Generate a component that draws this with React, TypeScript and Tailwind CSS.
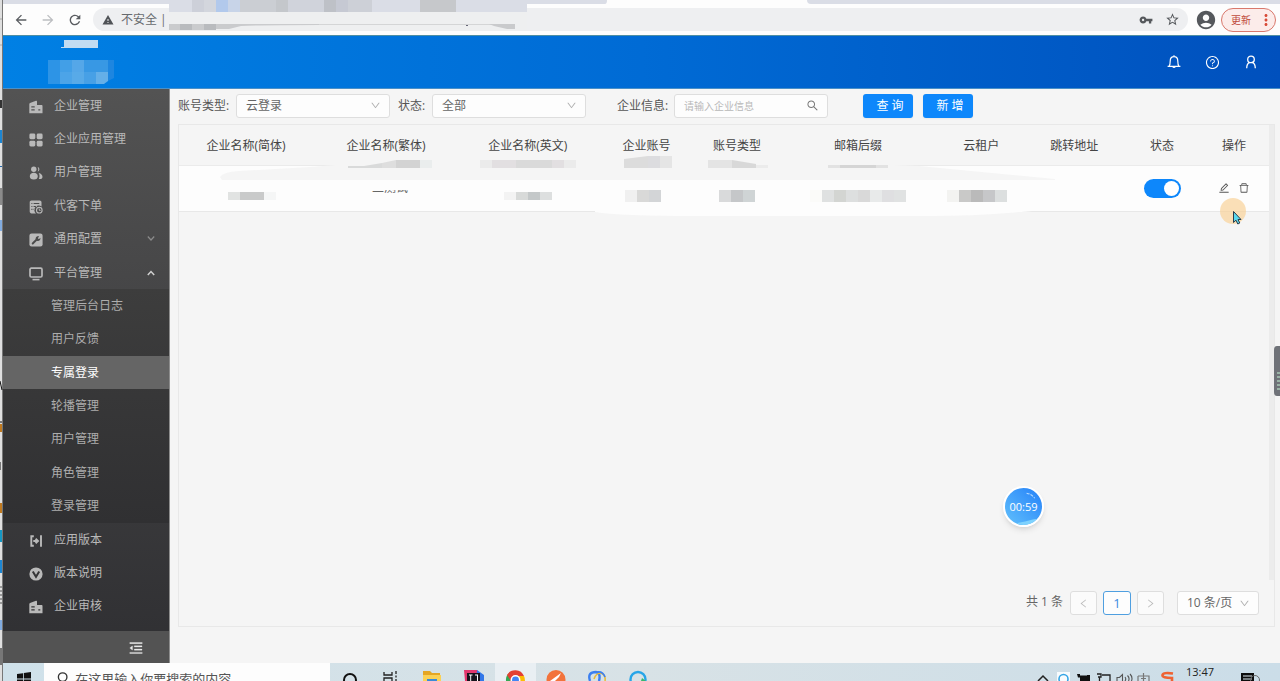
import React from "react";
import {
  AiOutlineQuestionCircle,
  AiOutlineMenuFold,
  AiOutlineEdit,
  AiOutlineDelete,
  AiOutlineSearch,
  AiOutlineDown,
  AiOutlineLeft,
  AiOutlineRight,
} from "react-icons/ai";
import {
  MdArrowBack,
  MdArrowForward,
  MdRefresh,
  MdWarning,
  MdVpnKey,
  MdStarBorder,
  MdAccountCircle,
  MdMoreVert,
} from "react-icons/md";

type IconName = "building" | "grid" | "users" | "order" | "wrench" | "monitor" | "version" | "note";

function MenuIcon({ name }: { name: IconName }) {
  return (
    <svg viewBox="0 0 14 14" className="h-[14px] w-[14px] shrink-0" fill="currentColor" aria-hidden="true">
      {name === "building" && (
        <path
          fillRule="evenodd"
          d="M1 3 7 .8a.7.7 0 0 1 1 .6V5h4.5c.6 0 1 .4 1 1v7.2H.3V4c0-.5.3-.8.7-1ZM2.3 6.2v1.3h3.4V6.2H2.3Zm0 3.1v1.3h3.4V9.3H2.3Zm7 0v1.3h2V9.3h-2Z"
        />
      )}
      {name === "grid" && (
        <>
          <rect x="0.4" y="0.6" width="5.9" height="5.6" rx="1.4" />
          <rect x="7.7" y="0.6" width="5.9" height="5.6" rx="1.4" />
          <rect x="0.4" y="7.8" width="5.9" height="5.6" rx="1.4" />
          <rect x="7.7" y="7.8" width="5.9" height="5.6" rx="1.4" />
        </>
      )}
      {name === "users" && (
        <>
          <circle cx="4.8" cy="3.3" r="2.7" />
          <path d="M.8 10.2c0-2.2 1.7-3.4 4-3.4s4 1.2 4 3.4c0 2-1.3 3.3-4 3.3s-4-1.3-4-3.3Z" />
          <path d="M8.6.9a2.5 2.5 0 0 1 0 4.8c.9-1.4.9-3.4 0-4.8ZM9.7 6.9c2.4.5 3.8 2 3.8 4 0 1.2-.9 2-2.5 2.1-.5 0-.9-.1-1.2-.3 1-1.6 1-4-.1-5.8Z" />
        </>
      )}
      {name === "order" && (
        <>
          <path
            fillRule="evenodd"
            d="M2.5.5h8.2c1 0 1.8.8 1.8 1.8V6.5a4.1 4.1 0 0 0-5.5 6.9H2.5C1.400 13.400.7 12.600.7 11.600V2.300C.7 1.300 1.500.5 2.500.5ZM4.600 3v1.100h5.700V3H4.600Zm0 2.900v1.100h3.300V5.900H4.600Zm0 2.900v1.100h1.400V8.800H4.600ZM2.400 3v1.100h1V3h-1Zm0 2.900v1.100h1V5.900h-1Zm0 2.900v1.100h1V8.800h-1Z"
          />
          <circle cx="10.300" cy="10.200" r="2.800" fill="none" stroke="currentColor" strokeWidth="1.100" />
          <path d="M10.300 8.600v1.800h1.400" fill="none" stroke="currentColor" strokeWidth="0.900" />
        </>
      )}
      {name === "wrench" && (
        <>
          <rect x="0.400" y="0.500" width="13.200" height="13" rx="2.200" />
          <path d="M3.700 10.500 7.200 7" stroke="#4b4b4b" strokeWidth="1.900" strokeLinecap="round" />
          <path d="M10.200 3.500 8.900 4.900l.3.900.9.300 1.300-1.300c.4 2-1.100 3.500-2.900 3.200C6.600 7.600 6.200 5.900 6.900 4.600c.7-1.200 2-1.700 3.300-1.100Z" fill="#4b4b4b" />
        </>
      )}
      {name === "monitor" && (
        <>
          <rect x="1" y="1.200" width="12" height="8.800" rx="1.300" fill="none" stroke="currentColor" strokeWidth="1.700" />
          <path d="M3.500 11.800h7v1.600h-7z" />
        </>
      )}
      {name === "version" && (
        <path
          d="M4.800 2.200H2.300v9.600H4.800M12 1.300v11.400M4.300 7h4M6.600 4.700 9 7 6.600 9.300"
          fill="none"
          stroke="currentColor"
          strokeWidth="1.900"
        />
      )}
      {name === "note" && (
        <>
          <circle cx="7" cy="7" r="6.600" />
          <path d="M3.800 4.500 7 9.800l3.200-5.300" fill="none" stroke="#353537" strokeWidth="2" />
        </>
      )}
    </svg>
  );
}

interface MenuEntry {
  label: string;
  icon: IconName;
  arrow?: "down" | "up";
}

const topMenu: MenuEntry[] = [
  { label: "企业管理", icon: "building" },
  { label: "企业应用管理", icon: "grid" },
  { label: "用户管理", icon: "users" },
  { label: "代客下单", icon: "order" },
  { label: "通用配置", icon: "wrench", arrow: "down" },
  { label: "平台管理", icon: "monitor", arrow: "up" },
];
const subMenu = ["管理后台日志", "用户反馈", "专属登录", "轮播管理", "用户管理", "角色管理", "登录管理"];
const bottomMenu: MenuEntry[] = [
  { label: "应用版本", icon: "version" },
  { label: "版本说明", icon: "note" },
  { label: "企业审核", icon: "building" },
];

function MenuItem({ item }: { item: MenuEntry }) {
  return (
    <li className="flex flex-1">
      <a href="#" className="flex flex-1 items-center pr-[14px] pl-[26px] text-[#b9b9b9]">
        <span className="pt-[2px]">
          <MenuIcon name={item.icon} />
        </span>
        <span className="flex-1 pl-[11px]">{item.label}</span>
        {item.arrow === "down" && (
          <svg viewBox="0 0 8 8" className="h-2 w-2 text-[#8b8b8b]" fill="none" stroke="currentColor" strokeWidth="1.200">
            <path d="M.8 1.500 4 5l3.200-3.500" />
          </svg>
        )}
        {item.arrow === "up" && (
          <svg viewBox="0 0 8 8" className="h-2 w-2 text-[#d0d0d0]" fill="none" stroke="currentColor" strokeWidth="1.500">
            <path d="M.8 6 4 2.500 7.200 6" />
          </svg>
        )}
      </a>
    </li>
  );
}

function Sidebar() {
  return (
    <aside className="flex w-[167px] shrink-0 flex-col border-r border-[#8d8d8d] bg-linear-to-b from-[#535353] to-[#2f2f32]">
      <nav className="flex flex-1 flex-col pb-2">
        <ul className="flex flex-1 flex-col">
          {topMenu.map((m) => (
            <MenuItem key={m.label} item={m} />
          ))}
          <li className="flex flex-[7]">
            <ul className="flex flex-1 flex-col bg-linear-to-b from-[#3d3d3d] to-[#303032]">
              {subMenu.map((label) => (
                <li key={label} className="flex flex-1">
                  <a
                    href="#"
                    className={
                      label === "专属登录"
                        ? "flex flex-1 items-center bg-[#656565] pl-12 text-white"
                        : "flex flex-1 items-center pl-12 text-[#adadad]"
                    }
                  >
                    {label}
                  </a>
                </li>
              ))}
            </ul>
          </li>
          {bottomMenu.map((m) => (
            <MenuItem key={m.label} item={m} />
          ))}
        </ul>
      </nav>
      <div className="flex h-8 items-center justify-end bg-[#535353] pt-[2px] pr-[25px]">
        <button aria-label="收起菜单" className="text-[#e8e8e8]">
          <AiOutlineMenuFold className="h-4 w-4" stroke="currentColor" strokeWidth="20" />
        </button>
      </div>
    </aside>
  );
}

function BrowserBar() {
  return (
    <div className="relative h-9 shrink-0 border-b border-[#4f8fa3] bg-[#fdfdfd] pt-1">
      <svg className="absolute top-0 left-0 h-1 w-full" aria-hidden="true">
        <rect width="100%" height="4" fill="#dadde6" />
        <path d="M602 4Q604 4 604 0H804Q804 4 808 4Z" fill="#fdfdfd" />
      </svg>
      <div className="flex h-[31px] items-center pr-1">
        <div className="flex items-center gap-[11px] pl-[10px] text-[#5a5d61]">
          <button aria-label="后退">
            <MdArrowBack className="h-4 w-4" />
          </button>
          <button aria-label="前进" className="text-[#bcbec1]">
            <MdArrowForward className="h-4 w-4" />
          </button>
          <button aria-label="刷新">
            <MdRefresh className="h-4 w-4" />
          </button>
        </div>
        <div className="ml-[10px] flex h-[23px] flex-1 items-center rounded-full bg-[#eeeff1] pr-2 pl-[9px] text-[#66696d]">
          <MdWarning className="h-3 w-3 text-[#505357]" />
          <span className="flex-1 pl-[7px]">不安全 |</span>
          <MdVpnKey className="h-[14px] w-[14px] text-[#55585c]" />
          <MdStarBorder className="ml-3 h-[15px] w-[15px] text-[#55585c]" />
        </div>
        <MdAccountCircle className="ml-[7px] h-[22px] w-[22px] text-[#55585c]" />
        <button className="ml-1 flex h-6 w-[55px] items-center justify-between rounded-full border border-[#d9786c] bg-[#fcecea] pl-[9px] text-[10px] text-[#bf4a3c]">
          更新
          <MdMoreVert className="h-[18px] w-[18px] text-[#d84a38]" />
        </button>
      </div>
      <svg className="absolute top-0 left-[166px] h-[31px] w-[358px]" viewBox="0 0 358 31" aria-hidden="true">
        <rect width="358" height="12" fill="#dadde6" />
        <g>
          <rect x="23" width="12" height="12" fill="#cdd0d9" />
          <rect x="35" width="12" height="12" fill="#d3d6dd" />
          <rect x="47" width="12" height="12" fill="#b2c9ec" />
          <rect x="59" width="12" height="12" fill="#c8d4e8" />
          <rect x="71" width="36" height="12" fill="#cbced3" />
          <rect x="107" width="12" height="12" fill="#c4c7cb" />
          <rect x="119" width="36" height="12" fill="#d0d3db" />
          <rect x="155" width="12" height="12" fill="#bec1c7" />
          <rect x="167" width="12" height="12" fill="#c6c9d3" />
          <rect x="179" width="24" height="12" fill="#cdd0d7" />
          <rect x="251" width="36" height="12" fill="#c6c8cb" />
        </g>
        <rect y="12" width="358" height="19" fill="#eeeff0" />
        <path d="M0 24H150V25Q90 25 72 26L60 29H46V30H0Z" fill="#cacbcd" />
        <path d="M11 24h12v6H11zM35 24h12v6H35z" fill="#b9bbbe" />
        <path d="M150 24H338V25H150Z" fill="#d4d5d6" />
        <path d="M320 24H346V29H338L325 26Z" fill="#c9cacc" />
        <path d="M297 25h2v1h-2z" fill="#667" />
      </svg>
    </div>
  );
}

function AppHeader() {
  return (
    <header className="flex h-[53px] shrink-0 items-center border-b border-[#4a90c8] bg-linear-to-r from-[#0080e4] via-[#006bd5] to-[#0050bd]">
      <svg viewBox="0 0 70 48" className="ml-[45px] h-12 w-[70px]" aria-hidden="true">
        <path d="M16 2H50V10H13V9H16Z" fill="#c1dcf2" />
        <g>
          <path d="M0 22h12v24H0z" fill="#2d94e6" />
          <path d="M12 22h12v12H12z" fill="#429fe7" />
          <path d="M24 22h12v12H24z" fill="#55a7e8" />
          <path d="M36 22h24v12H36z" fill="#3898e4" />
          <path d="M12 34h12v12H12z" fill="#4ca4e8" />
          <path d="M24 34h12v12H24z" fill="#58aae8" />
          <path d="M36 34h12v12H36z" fill="#47a0e6" />
          <path d="M48 34h12v9l-4 3h-8z" fill="#65afe8" />
          <path d="M60 22h6v18l-6 3z" fill="#1e86e0" />
        </g>
      </svg>
      <div className="ml-auto flex items-center gap-6 pr-[22px] text-white">
        <button aria-label="通知">
          <svg viewBox="0 0 14 14" className="h-[14px] w-[14px]" fill="none" stroke="currentColor" strokeWidth="1.200">
            <path d="M.6 11.300H13.400M2 11.300C3 10.300 3.200 9.300 3.200 6.200 3.200 3.500 4.800 1.700 7 1.700s3.800 1.800 3.800 4.500c0 3.100.2 4.100 1.200 5.100M7 .2v1.500" />
            <path d="M5.300 12.100a1.800 1.500 0 0 0 3.400 0Z" fill="currentColor" stroke="none" />
          </svg>
        </button>
        <button aria-label="帮助">
          <AiOutlineQuestionCircle className="h-[15px] w-[15px]" />
        </button>
        <button aria-label="账户">
          <svg viewBox="0 0 14 14" className="h-[14px] w-[14px]" fill="none" stroke="currentColor" strokeWidth="1.300">
            <circle cx="7" cy="4.400" r="3.300" />
            <path d="M5.500 7.400C3.700 8.200 2.800 10.400 2.700 13.200M8.500 7.400c1.800.8 2.700 3 2.800 5.800" />
          </svg>
        </button>
      </div>
    </header>
  );
}

function PickList({ id, value, width, label }: { id: string; value: string; width: string; label?: string }) {
  return (
    <div className={"relative flex h-6 items-center " + width}>
      <select
        id={id}
        aria-label={label}
        className="h-full w-full appearance-none rounded-[3px] border border-[#dedede] bg-[#fdfdfd] pl-[9px] text-[#666]"
        defaultValue={value}
      >
        <option>{value}</option>
      </select>
      <AiOutlineDown className="pointer-events-none absolute right-[9px] h-[11px] w-[11px] text-[#b0b0b0]" />
    </div>
  );
}

function Filters() {
  return (
    <form className="flex h-[35px] items-center pb-[2px] text-[#555]" onSubmit={(e) => e.preventDefault()}>
      <label htmlFor="account-type" className="w-[58px] whitespace-nowrap">
        账号类型:
      </label>
      <PickList id="account-type" value="云登录" width="w-[154px]" />
      <label htmlFor="state" className="ml-2 w-[34px] whitespace-nowrap">
        状态:
      </label>
      <PickList id="state" value="全部" width="w-[154px]" />
      <label htmlFor="company" className="ml-[31px] w-[57px] whitespace-nowrap">
        企业信息:
      </label>
      <div className="relative flex h-6 w-[154px] items-center">
        <input
          id="company"
          placeholder="请输入企业信息"
          className="h-full w-full rounded-[3px] border border-[#dedede] bg-[#fdfdfd] pl-[9px] text-[10px] placeholder:text-[#b8b8b8]"
        />
        <AiOutlineSearch className="absolute right-[9px] h-[13px] w-[13px] text-[#777]" />
      </div>
      <button className="ml-[35px] h-6 w-[50px] rounded-[3px] bg-[#0d87fb] pl-1 text-white shadow-xs">查 询</button>
      <button className="ml-[10px] h-6 w-[50px] rounded-[3px] bg-[#0d87fb] pl-1 text-white shadow-xs">新 增</button>
    </form>
  );
}

function Mosaic({ colors, short }: { colors: string[]; short?: boolean }) {
  return (
    <div className={short ? "flex h-2 justify-center" : "flex h-3 justify-center"}>
      {colors.map((c, i) => (
        <span key={i} className="w-3 shrink-0" style={{ backgroundColor: c }} />
      ))}
    </div>
  );
}

const columns: { title: string; width: string }[] = [
  { title: "企业名称(简体)", width: "w-[12.3%]" },
  { title: "企业名称(繁体)", width: "w-[13.4%]" },
  { title: "企业名称(英文)", width: "w-[12.6%]" },
  { title: "企业账号", width: "w-[9.2%]" },
  { title: "账号类型", width: "w-[7.4%]" },
  { title: "邮箱后缀", width: "w-[14.8%]" },
  { title: "云租户", width: "w-[7.8%]" },
  { title: "跳转地址", width: "w-[9.3%]" },
  { title: "状态", width: "w-[6.8%]" },
  { title: "操作", width: "w-[6.4%]" },
];

function Smudges() {
  return (
    <svg
      className="pointer-events-none absolute top-0 left-0 h-24 w-full"
      viewBox="0 0 1090 96"
      preserveAspectRatio="none"
      aria-hidden="true"
    >
      <path d="M41 52Q44 47 60 46L131 42L170 39H690L740 41L876 54V55H43Z" fill="#f5f5f5" />
      <path d="M180 55H240V65H180Z" fill="#fdfdfd" />
      <path d="M416 85H864Q800 91 750 91H520Q440 91 416 87Z" fill="#fdfdfd" />
      <g fill="#dcdcdc">
        <path d="M169 43V41H185L203 38V43H169Z" fill="#d9dada" />
        <path d="M203 38L217 35V43H203Z" fill="#dedede" />
        <path d="M217 35h24v8h-24z" fill="#d3d3d3" />
        <path d="M241 35h12v8h-12z" fill="#eaeded" />
        <path d="M301 35h12v8h-12zM385 35h12v8h-12z" fill="#ebebeb" />
        <path d="M313 35h24v8h-24zM373 35h12v8h-12z" fill="#e2dfe1" />
        <path d="M337 35h36v8h-36z" fill="#dadada" />
        <path d="M445 34L469 31V43H445Z" />
        <path d="M469 31h12v12h-12z" fill="#dcdcdf" />
        <path d="M481 31h12v12h-12z" fill="#e5e5e5" />
        <path d="M529 35h24v8h-24z" fill="#e4e4e4" />
        <path d="M553 35L577 39V43H553Z" fill="#d8d8d8" />
        <path d="M577 40h12v3h-12z" fill="#ebebeb" />
        <path d="M649 40h60v3h-60z" fill="#e2e2e2" />
        <path d="M661 40h36v3h-36z" fill="#d5d5d5" />
      </g>
    </svg>
  );
}

function CompanyTable() {
  return (
    <div className="relative flex-1">
      <table className="w-full table-fixed border-collapse text-center">
        <thead>
          <tr className="h-10 text-[#444]">
            {columns.map((c) => (
              <th key={c.title} className={"border-b border-[#ebebeb] pt-[2px] font-normal whitespace-nowrap " + c.width}>
                {c.title}
              </th>
            ))}
          </tr>
        </thead>
        <tbody>
          <tr className="h-[46px] border-b border-[#e8e8e8] bg-[#fdfdfd]">
            <td className="pt-4">
              <div className="pl-3">
                <Mosaic colors={["#e1e3e2", "#c9caca", "#c9caca", "#f5f6f6"]} short />
              </div>
            </td>
            <td className="pl-2 text-[#666]">二测试</td>
            <td className="pt-4">
              <Mosaic colors={["#f3f3f3", "#d8dad9", "#c4c8c9", "#dddfdf"]} short />
            </td>
            <td className="pt-4 pr-2">
              <Mosaic colors={["#f0f0f0", "#d9d9d8", "#d3d5d7"]} />
            </td>
            <td className="pt-4">
              <Mosaic colors={["#d9dadb", "#c5c7c9", "#cfd4d5"]} />
            </td>
            <td className="pt-4">
              <Mosaic
                colors={["#fbfbf9", "#dfe1e1", "#d3d5d2", "#dddfdf", "#d9d9d9", "#e8eaea", "#dfdfe1", "#e0e2e2"]}
              />
            </td>
            <td className="pt-4 pr-2">
              <Mosaic colors={["#f3f3f1", "#c9c9c8", "#bababa", "#c6c7c9", "#dcdfdf"]} />
            </td>
            <td />
            <td>
              <button
                role="switch"
                aria-checked="true"
                aria-label="状态"
                className="mx-auto flex h-[19px] w-[37px] items-center justify-end rounded-full bg-[#0d87fb] pr-[2px]"
              >
                <span className="h-[15px] w-[15px] rounded-full bg-white" />
              </button>
            </td>
            <td>
              <div className="flex items-center justify-center gap-2 text-[#555]">
                <button aria-label="编辑">
                  <AiOutlineEdit className="h-3 w-3" />
                </button>
                <button aria-label="删除">
                  <AiOutlineDelete className="h-3 w-3" />
                </button>
              </div>
            </td>
          </tr>
        </tbody>
      </table>
      <Smudges />
    </div>
  );
}

function Pagination() {
  return (
    <div className="flex h-[46px] items-center justify-end pr-[15px] text-[#666]">
      <span className="pr-[7px] pb-[2px]">共 1 条</span>
      <button
        aria-label="上一页"
        className="flex h-6 w-[27px] items-center justify-center rounded-[3px] border border-[#dedede] bg-[#fbfbfb] text-[#bbb]"
      >
        <AiOutlineLeft className="h-[11px] w-[11px]" />
      </button>
      <button className="ml-[6px] h-6 w-7 rounded-[3px] border border-[#4f9fe0] bg-[#fdfdfd] text-[13px] text-[#3a8be0]">
        1
      </button>
      <button
        aria-label="下一页"
        className="ml-[6px] flex h-6 w-[27px] items-center justify-center rounded-[3px] border border-[#dedede] bg-[#fbfbfb] text-[#bbb]"
      >
        <AiOutlineRight className="h-[11px] w-[11px]" />
      </button>
      <div className="ml-[13px]">
        <PickList id="page-size" value="10 条/页" width="w-[82px]" label="每页条数" />
      </div>
    </div>
  );
}

function Taskbar() {
  return (
    <footer className="flex h-[18px] shrink-0 overflow-hidden bg-linear-to-r from-[#cfe1ea] via-[#d8e2e6] to-[#cbdde8]">
      <button aria-label="开始" className="flex h-8 w-[41px] items-center justify-center">
        <svg viewBox="0 0 14 14" className="h-[14px] w-[14px]" fill="#111">
          <path d="M0 2 6 1.200V6.600H0ZM6.800 1.100 14 0V6.600H6.800ZM0 7.400H6V12.800L0 12ZM6.800 7.400H14V14L6.800 12.900Z" />
        </svg>
      </button>
      <label className="flex h-8 w-[286px] items-center bg-[#fdfdfd] pl-3">
        <svg viewBox="0 0 14 18" className="h-[18px] w-[14px]" fill="none" stroke="#333" strokeWidth="1.400">
          <circle cx="7" cy="7" r="4.500" />
          <path d="M5 11 1 17" />
        </svg>
        <input
          aria-label="搜索"
          placeholder="在这里输入你要搜索的内容"
          className="w-full pl-[6px] text-[13px] placeholder:text-[#555]"
        />
      </label>
      <svg viewBox="0 0 340 18" className="h-[18px] w-[340px]" aria-hidden="true">
        <rect x="165" width="41" height="18" fill="#e9eff3" />
        <circle cx="20" cy="17" r="6" fill="none" stroke="#111" strokeWidth="2" />
        <path d="M54 9V12H62V9M54 18V15H62V18M66 8v3M66 12.500v2M66 16v2" stroke="#222" strokeWidth="1.300" fill="none" />
        <path d="M93 8H100L102 10H110V18H93Z" fill="#e5a623" />
        <path d="M93 12H111V18H93Z" fill="#fbd156" />
        <path d="M97 16H107V18H97Z" fill="#3a8bd8" />
        <path d="M134 7H147L151 12V18H135Z" fill="#e2386e" />
        <path d="M147 7L154 12V18H146Z" fill="#3277e8" />
        <path d="M137 10H150V18H137Z" fill="#16131c" />
        <path d="M139 12h3.500M140.700 12v6M147.500 12v6M145 12h3" stroke="#fff" strokeWidth="1" />
        <path d="M176 18A9 9 0 0 1 192 11.500L186 18Z" fill="#35a853" />
        <path d="M177 12A9.500 9.500 0 0 1 194 13H185L181 18Z" fill="#e34133" />
        <path d="M186 13H194Q195 15 195 18H187Z" fill="#fbbc05" />
        <circle cx="185.500" cy="17" r="4.200" fill="#4285f4" stroke="#fff" strokeWidth="1.500" />
        <circle cx="226" cy="16.500" r="9.500" fill="#f2733b" />
        <path d="M220 18L231 10L229 14L225 18Z" fill="#fff" />
        <path d="M260 18Q257 9 266 9Q271 10 269 18" fill="none" stroke="#3b7ff0" strokeWidth="2.400" />
        <path d="M264 16Q266 10 271 10Q276 12 275 18" fill="none" stroke="#e9bb3b" strokeWidth="1.600" />
        <path d="M267 9Q273 8 275 14" fill="none" stroke="#3b7ff0" strokeWidth="1.600" />
        <circle cx="308" cy="16.500" r="7.500" fill="none" stroke="#27a5e8" strokeWidth="2.400" />
        <path d="M312 15l4 3h-5z" fill="#39b86b" />
      </svg>
      <div className="ml-auto flex h-[18px]">
        <svg viewBox="0 0 150 18" className="h-[18px] w-[150px]" aria-hidden="true">
          <path d="M12 18L17 13L22 18" stroke="#222" strokeWidth="1.500" fill="none" />
          <rect x="31" y="9" width="13" height="9" fill="#f7fbfd" />
          <circle cx="37.500" cy="16" r="4.500" fill="none" stroke="#35a5e5" strokeWidth="1.600" />
          <path d="M51 11h3v1.500h8V18H54v-3.500h-2z" fill="#111" />
          <path d="M61 12h3v6h-3z" fill="#111" />
          <path d="M71 11h4v3h-3M76 12H84V18M73.500 14V18" stroke="#222" strokeWidth="1.300" fill="none" />
          <path d="M91 18V14.500h2.500l3-3V18M99 14q1.500 2 0 4M101.500 12.500q2.500 2.500 1 5.500M104 11q3 3 1.500 7" stroke="#555" strokeWidth="1.100" fill="none" />
          <path d="M112 13h11v5M112 13v5M117.500 10v8M115 15.500h5" stroke="#777" strokeWidth="1.200" fill="none" />
          <path d="M147 10.500Q137 9 136.500 12T146 15V18" stroke="#ef6232" strokeWidth="2.600" fill="none" />
        </svg>
        <time className="w-[62px] pl-[10px] text-[11px] leading-[18px] text-[#222]">13:47</time>
        <svg viewBox="0 0 42 18" className="h-[18px] w-[42px]" aria-hidden="true">
          <path d="M3 10H16V18H3Z" fill="#0c0c0c" />
          <path d="M5 13h9M5 16h9" stroke="#dce8ee" strokeWidth="1" />
          <circle cx="17" cy="17" r="4.500" fill="none" stroke="#666" strokeWidth="1" />
        </svg>
      </div>
    </footer>
  );
}

function DesktopEdge() {
  return (
    <svg className="h-full w-[3px] shrink-0" aria-hidden="true">
      <rect width="2" height="100%" fill="#dfdfdf" />
      <rect x="2" width="1" height="100%" fill="#777" />
      <path d="M0 45h2M0 190h2M0 19h2" stroke="#aaa" />
      <path d="M0 100h2v8H0z" fill="#333" />
      <path d="M0 130h2v13H0z" fill="#1d86d2" />
      <path d="M0 166h2v1H0z" fill="#2268ae" />
      <path d="M0 188h2v17H0z" fill="#8b8b8b" />
      <path d="M0 220h2v11H0z" fill="#82ace0" />
      <path d="M0 381l2 9M0 422h2M0 462v8" stroke="#111" />
      <path d="M0 424h2v8H0zM0 503h2v10H0z" fill="#c07a20" />
      <path d="M0 530h2v12H0z" fill="#1597c4" />
      <path d="M0 560h2v13H0z" fill="#1d86d2" />
      <path d="M0 587h2M0 591h2M0 595h2M0 599h2M0 603h2" stroke="#555" />
      <path d="M0 620h2v10H0z" fill="#82ace0" />
      <path d="M0 648h2v17H0z" fill="#777" />
    </svg>
  );
}

export default function App() {
  return (
    <div className="relative flex h-screen overflow-hidden bg-[#f5f5f5] font-['Open_Sans','Noto_Sans_CJK_SC',sans-serif] text-[12px] leading-4">
      <DesktopEdge />
      <div className="flex min-w-0 flex-1 flex-col">
        <BrowserBar />
        <AppHeader />
        <div className="flex min-h-0 flex-1">
          <Sidebar />
          <main className="flex min-w-0 flex-1 flex-col pr-[5px] pb-[36px] pl-2">
            <Filters />
            <section className="flex flex-1 flex-col border border-[#e8e8e8]">
              <div className="flex flex-1">
                <CompanyTable />
                <div className="w-[5px] bg-[#ececec]" />
              </div>
              <Pagination />
            </section>
          </main>
        </div>
        <Taskbar />
      </div>

      <div className="absolute right-[236px] bottom-[154px] flex h-[41px] w-[41px] items-center justify-center overflow-hidden rounded-full border-2 border-white bg-linear-to-tr from-[#62c0fb] to-[#2580f8] text-[11px] text-white shadow-md">
        <svg viewBox="0 0 36 36" className="absolute inset-0 h-full w-full" fill="none" aria-hidden="true">
          <path d="M12 34Q20 33 26 31T34 32L30 36H12Z" fill="#7fd2fd" />
          <path d="M21 5Q26 6 29 10" stroke="#b9dcff" strokeDasharray="3 1" />
        </svg>
        <span className="relative">00:59</span>
      </div>

      <svg viewBox="0 0 26 30" className="pointer-events-none absolute top-[198px] right-[34px] h-[30px] w-[26px]" aria-hidden="true">
        <circle cx="13" cy="13" r="13" fill="#f9cf92" fillOpacity="0.650" />
        <path d="M13.500 13.500V24.500L16 22.200L17.800 26L19.800 25L18 21.500H21Z" fill="#58d8ee" stroke="#2b3c4a" strokeWidth="1" />
      </svg>

      <svg viewBox="0 0 6 50" className="absolute top-[346px] right-0 h-[50px] w-[6px]" aria-hidden="true">
        <path d="M6 0H3Q0 0 0 4V46Q0 50 3 50H6Z" fill="#6f7278" />
        <path d="M3 27h3M3 31h3M3 35h3M3 39h3M3 43h3" stroke="#a9c9b5" strokeWidth="1.500" />
      </svg>
    </div>
  );
}
